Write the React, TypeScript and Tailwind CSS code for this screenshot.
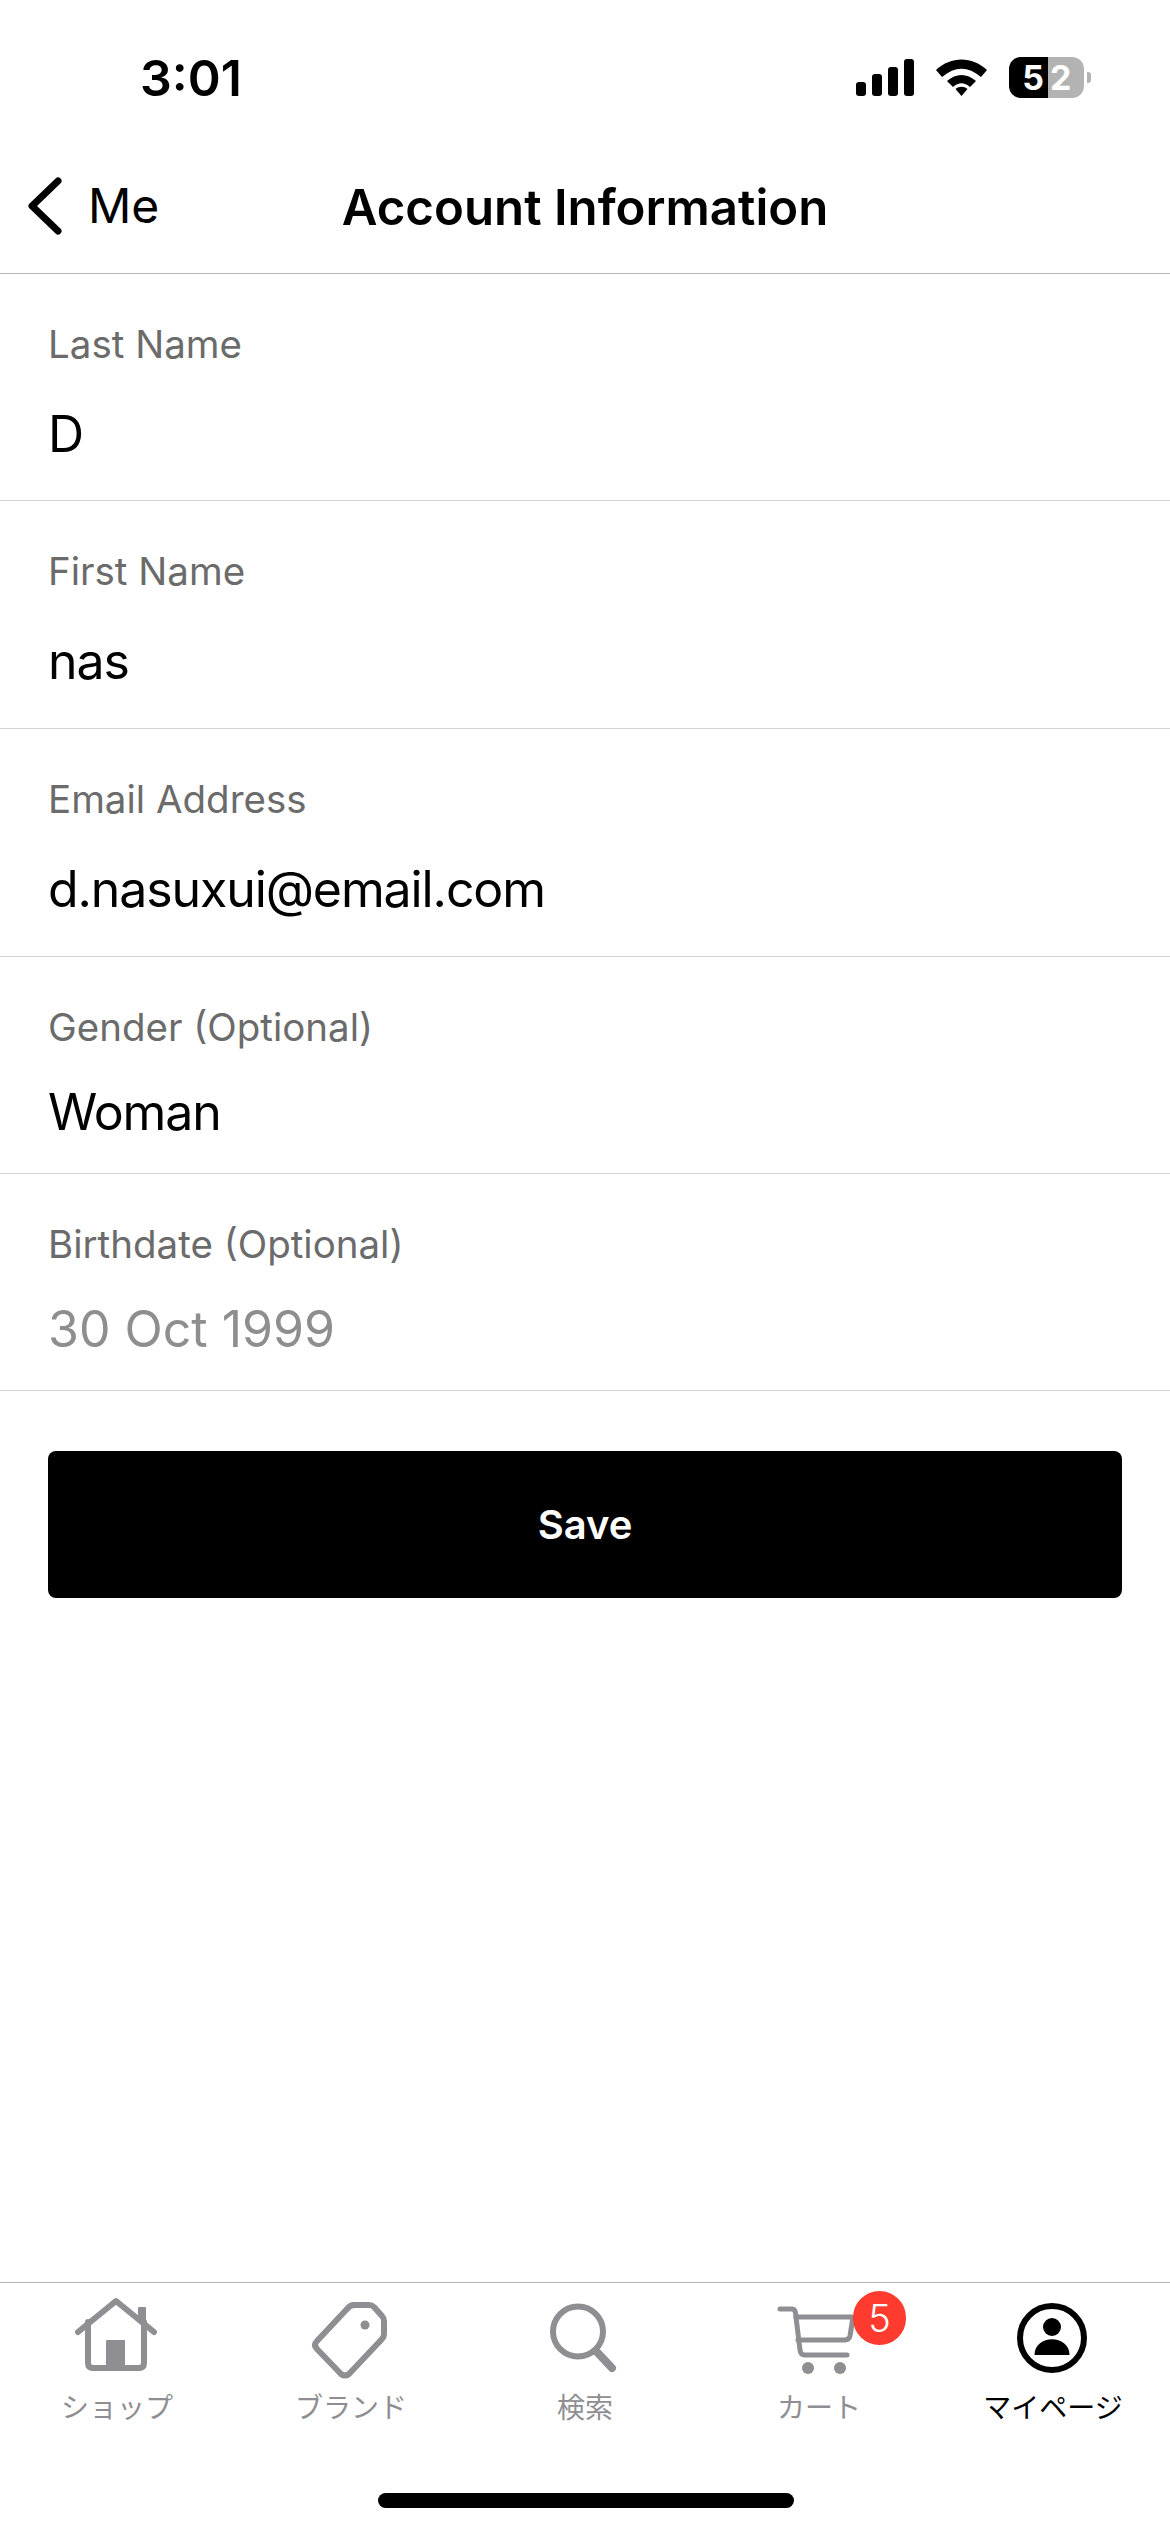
function Row({ label, value, muted, h, gap }: { label: string; value: string; muted?: boolean; h: string; gap: string }) {
  return (
    <div className={`${h} shrink-0 border-b border-[#d4d4d4] pl-12 flex flex-col`}>
      <div className="text-[38.5px] leading-[44px] text-[#6b6b6b] mt-[48px]">{label}</div>
      <div className={`text-[50px] leading-[56px] ${gap} ${muted ? 'text-[#8e8e8e]' : 'text-black tracking-[-1.1px]'}`}>{value}</div>
    </div>
  );
}
function Tab({ label, active, children }: { label: string; active?: boolean; children: React.ReactNode }) {
  return (
    <div className="flex flex-col items-center relative">
      {children}
      <div className={`text-[28px] leading-[40px] mt-[2px] font-['Noto_Sans_CJK_JP',sans-serif] ${active ? 'text-black' : 'text-[#8e8e93]'}`}>{label}</div>
    </div>
  );
}
export default function App() {
  return (
    <div className="w-[1170px] h-[2532px] bg-white flex flex-col font-['Inter',sans-serif] overflow-hidden">
      <div className="h-[160px] flex items-start justify-between shrink-0">
        <div className="text-[50px] leading-[60px] font-semibold text-black ml-[140px] mt-[48px]">3:01</div>
        <div className="flex items-start mt-[57px] mr-[79px]">
          <svg width="58" height="41" viewBox="856 57 58 41" className="mr-[22px]">
            <rect x="856" y="82" width="10" height="14" rx="3" />
            <rect x="872" y="74" width="10" height="22" rx="3" />
            <rect x="888" y="67" width="10" height="29" rx="3" />
            <rect x="904" y="59" width="10" height="37" rx="3" />
          </svg>
          <svg width="51" height="41" viewBox="936 57 51 41" className="mr-[22px]">
            <path d="M936 70 C951 56 972 56 987 70 L981 77 C968 66 955 66 942 77 Z" />
            <path d="M947 81 C956 73 967 73 976 81 L970 87 C964 82 959 82 953 87 Z" />
            <path d="M955.5 89 C959 86 964 86 967.5 89 L961.5 96 Z" />
          </svg>
          <div className="w-[75px] h-[41px] rounded-[12px] overflow-hidden flex text-white font-bold text-[34px] leading-[41px]">
            <div className="w-[39px] bg-black flex justify-end pr-[4px]">5</div>
            <div className="w-[36px] bg-[#b3b3b3] pl-[2px]">2</div>
          </div>
          <div className="w-[4px] h-[11px] bg-[#b3b3b3] rounded-r-[3px] mt-[15px] ml-[3px]" />
        </div>
      </div>
      <div className="h-[114px] shrink-0 border-b border-[#b5b5b5] relative flex items-center justify-center pb-[20px]">
        <div className="absolute left-[28px] top-[17px] flex items-center">
          <svg width="34" height="58" viewBox="0 0 34 58" fill="none" stroke="black" strokeWidth="7" strokeLinecap="round" strokeLinejoin="round">
            <path d="M30 4 L4 29 L30 54" />
          </svg>
          <span className="text-[48px] leading-[58px] text-black ml-[26px]">Me</span>
        </div>
        <div className="text-[49.2px] leading-[60px] font-semibold text-black">Account Information</div>
      </div>
      <Row h="h-[227px]" gap="mt-[40px]" label="Last Name" value="D" />
      <Row h="h-[228px]" gap="mt-[40px]" label="First Name" value="nas" />
      <Row h="h-[228px]" gap="mt-[40px]" label="Email Address" value="d.nasuxui@email.com" />
      <Row h="h-[217px]" gap="mt-[35px]" label="Gender (Optional)" value="Woman" />
      <Row h="h-[217px]" gap="mt-[35px]" label="Birthdate (Optional)" value="30 Oct 1999" muted />
      <div className="mx-12 mt-[60px] h-[147px] bg-black rounded-[8px] flex items-center justify-center text-white text-[40px] font-semibold shrink-0">Save</div>
      <div className="flex-1" />
      <div className="h-[250px] shrink-0 border-t border-[#b5b5b5] grid grid-cols-5 content-start relative">
        <Tab label="ショップ">
          <svg width="234" height="90" viewBox="0 2295 234 90" fill="none" stroke="#8e8e93" strokeWidth="6" strokeLinecap="round" strokeLinejoin="round" className="mt-[11px]">
            <path d="M78 2333 L116 2302 L154 2333" />
            <path d="M88 2323 V2364 Q88 2369 93 2369 H139 Q144 2369 144 2364 V2323" />
            <rect x="138" y="2308" width="8" height="16" fill="#8e8e93" stroke="none" rx="1" />
            <rect x="106" y="2341" width="19" height="28" fill="#8e8e93" stroke="none" rx="1" />
          </svg>
        </Tab>
        <Tab label="ブランド">
          <svg width="234" height="90" viewBox="234 2295 234 90" fill="none" stroke="#8e8e93" strokeWidth="6" strokeLinecap="round" strokeLinejoin="round" className="mt-[11px]">
            <path d="M347 2310 Q350 2306 354 2306 H369 Q372 2306 374 2308 L382 2317 Q384 2319 384 2322 V2335 Q384 2338 382 2340 L349 2375 Q345 2378 341 2375 L317 2350 Q313 2346 317 2342 Z" />
            <circle cx="365" cy="2326" r="4.5" fill="#8e8e93" stroke="none" />
          </svg>
        </Tab>
        <Tab label="検索">
          <svg width="234" height="90" viewBox="468 2295 234 90" fill="none" stroke="#8e8e93" strokeWidth="6" strokeLinecap="round" className="mt-[11px]">
            <circle cx="578" cy="2332.5" r="25" />
            <path d="M596 2352 L612 2369" strokeWidth="8" />
          </svg>
        </Tab>
        <Tab label="カート">
          <svg width="234" height="90" viewBox="702 2295 234 90" fill="none" stroke="#8e8e93" strokeWidth="5" strokeLinecap="round" strokeLinejoin="round" className="mt-[11px]">
            <path d="M780 2310 H792 Q795 2310 795.5 2314 L800 2351 Q800.5 2356 805 2356 H847" />
            <path d="M796 2318 H853 L850 2337 Q849 2341 845 2341 H798" />
            <circle cx="808" cy="2369" r="6" fill="#8e8e93" stroke="none" />
            <circle cx="840" cy="2369" r="6" fill="#8e8e93" stroke="none" />
          </svg>
          <div className="absolute left-[151px] top-[8px] w-[53px] h-[54px] rounded-full bg-[#ff3b30] flex items-center justify-center text-white text-[38px] font-light leading-none">5</div>
        </Tab>
        <Tab label="マイページ" active>
          <svg width="234" height="90" viewBox="936 2295 234 90" className="mt-[11px]">
            <circle cx="1052" cy="2339" r="32" fill="none" stroke="black" strokeWidth="6" />
            <circle cx="1052" cy="2328" r="9" />
            <path d="M1034.5 2356 C1034.5 2335 1069.5 2335 1069.5 2356 Z" />
          </svg>
        </Tab>
        <div className="absolute left-[378px] top-[210px] w-[416px] h-[15px] bg-black rounded-full" />
      </div>
    </div>
  );
}
